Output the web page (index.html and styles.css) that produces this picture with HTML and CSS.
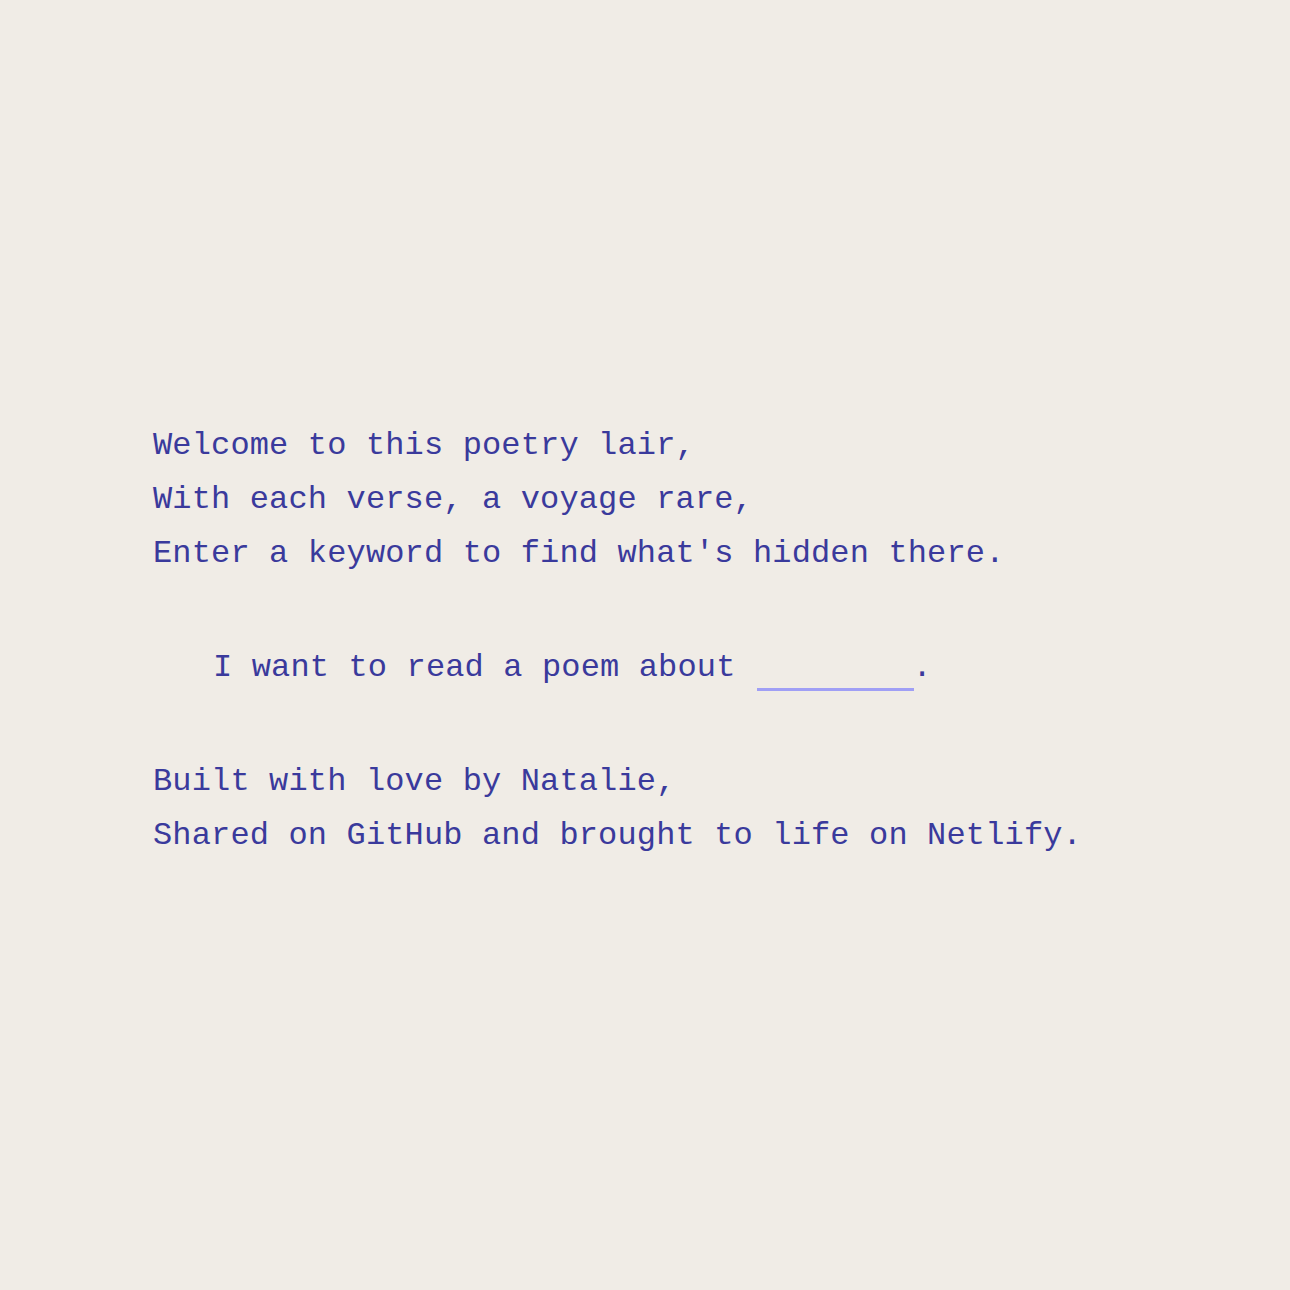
FILE: index.html
```html
<!DOCTYPE html>
<html lang="en">
<head>
<meta charset="utf-8">
<title>Poetry Lair</title>
<link rel="stylesheet" href="styles.css">
</head>
<body>
<main class="page">
  <div class="content">
    <p class="verse">Welcome to this poetry lair,<br>With each verse, a voyage rare,<br>Enter a keyword to find what's hidden there.</p>
    <form class="prompt">
      <label class="prompt-label" for="kw">I want to read a poem about</label>
      <input class="prompt-input" id="kw" type="text" autocomplete="off"><span class="dot">.</span>
    </form>
    <p class="verse">Built with love by Natalie,<br>Shared on GitHub and brought to life on Netlify.</p>
  </div>
</main>
</body>
</html>
```
FILE: styles.css
```css
html, body {
  margin: 0;
  padding: 0;
  background: #f0ece6;
}
.page {
  min-height: 100vh;
  box-sizing: border-box;
  padding-bottom: 8px;
  display: flex;
  align-items: center;
}
.content {
  padding-left: 153px;
  font-family: "Liberation Mono", "Courier New", monospace;
  font-size: 32px;
  letter-spacing: 0.15px;
  line-height: 54px;
  color: #3a3a9c;
}
.verse {
  margin: 0;
  white-space: nowrap;
}
.prompt {
  margin: 60px 0;
  padding-left: 60px;
  display: flex;
  align-items: baseline;
  white-space: nowrap;
}
.prompt-label {
  margin-right: 21px;
}
.prompt-input {
  width: 157px;
  border: none;
  border-bottom: 3px solid #a09ff5;
  background: transparent;
  font: inherit;
  color: inherit;
  padding: 0;
  outline: none;
  height: 40px;
  box-sizing: border-box;
  align-self: flex-end;
  margin-bottom: 4px;
}
.dot {
  margin-left: -1px;
}
```
